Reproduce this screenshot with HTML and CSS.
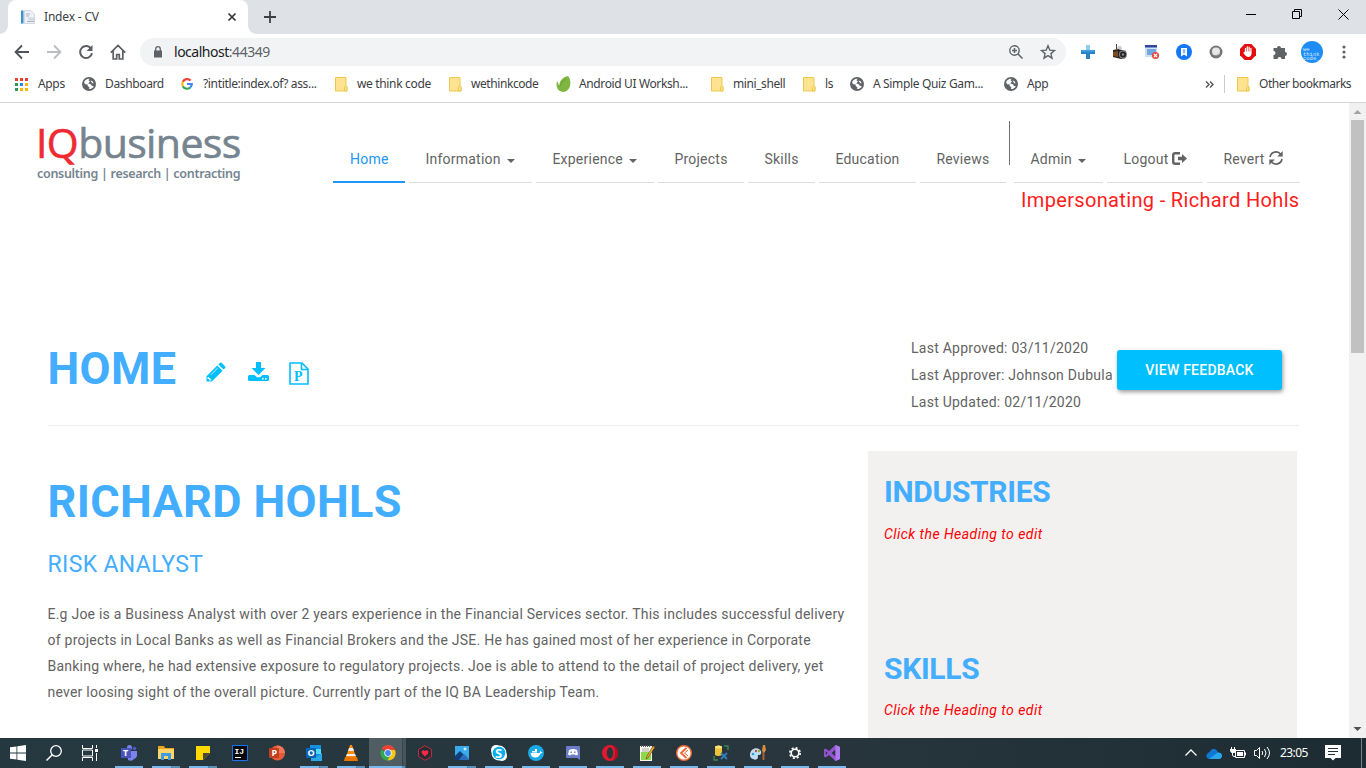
FILE: index.html
```html
<!DOCTYPE html>
<html lang="en">
<head>
<meta charset="utf-8">
<title>Index - CV</title>
<link rel="stylesheet" href="styles.css">
</head>
<body>
<svg class="defs" aria-hidden="true">
  <symbol id="globe" viewBox="0 0 14 14"><circle cx="7" cy="7" r="7" fill="#5f6368"/><path d="M2 5.2C3 3 5 1.6 7.6 1.8L6.5 3.3 8 4.6 6.2 6.4 9 7.2 9.8 8.8 11.8 9.2C11 11 9 12.2 7 12.1L7.4 10.2 5.6 9 5.8 7.6 3.2 7.2Z" fill="#fff"/><path d="M8.5 3.2 10.8 4.6 11.6 6.5 10 6Z" fill="#fff"/></symbol>
  <symbol id="folder" viewBox="0 0 13 15"><path d="M.5.5h10.500v9h1v4.500h-11.500z" fill="#ffe391" stroke="#ecc94e"/><path d="M9.500 14v-3.500q0-1 1.200-1t1.300 1V14z" fill="#ffe391" stroke="#ecc94e"/></symbol>
</svg>

<div class="tabstrip">
  <div class="tab">
    <svg class="favicon" width="16" height="16" viewBox="0 0 16 16"><path d="M1 1h9l5 4v10H1z" fill="#f1f3f6"/><path d="M1 1.500h2.500v13H1z" fill="#3d93cb"/><path d="M4.500 1.500h6l4 3.500v9.500h-10z" fill="#edf0f4" stroke="#cdd3dc" stroke-width=".8"/><path d="M6 5h4M6 7h3M7 12.500h7" stroke="#a9b4c3"/><path d="M8 8.500h6.500v3H8z" fill="#d2d9e2"/></svg>
    <span class="tab-title">Index - CV</span>
    <svg class="tab-close" width="8" height="8" viewBox="0 0 8 8"><path d="M.5.5l7 7M7.500.5l-7 7" stroke="#303438" stroke-width="1.700"/></svg>
  </div>
  <svg class="new-tab" width="12" height="12" viewBox="0 0 12 12"><path d="M6 0v12M0 6h12" stroke="#3c4043" stroke-width="1.800"/></svg>
  <div class="window-buttons">
    <svg width="10" height="11" viewBox="0 0 10 11"><path d="M0 5.500h10" stroke="#000"/></svg>
    <svg width="10" height="10" viewBox="0 0 10 10"><path d="M.5 2.500h7v7h-7zM2.500 2.500v-2h7v7h-2" fill="none" stroke="#000"/></svg>
    <svg width="11" height="11" viewBox="0 0 11 11"><path d="M.5.5l10 10M10.500.5l-10 10" stroke="#000"/></svg>
  </div>
</div>

<div class="toolbar">
  <div class="nav-buttons">
    <svg width="16" height="16" viewBox="0 0 16 16"><path d="M15 8H2M8 1.500L1.500 8 8 14.500" fill="none" stroke="#505357" stroke-width="1.800"/></svg>
    <svg width="16" height="16" viewBox="0 0 16 16"><path d="M1 8h13M8 1.500L14.500 8 8 14.500" fill="none" stroke="#bbbdc0" stroke-width="1.800"/></svg>
    <svg width="16" height="16" viewBox="0 0 16 16"><path d="M13.300 5A6 6 0 1 0 14 9.200" fill="none" stroke="#5a5d61" stroke-width="2"/><path d="M14.500 1v6h-6z" fill="#5a5d61"/></svg>
    <svg width="16" height="16" viewBox="0 0 16 16"><path d="M3.200 7v8h3.500v-4.500h2.600V15h3.500V7M.8 8.700L8 1.500l7.200 7.200" fill="none" stroke="#5a5d61" stroke-width="1.700"/></svg>
  </div>
  <div class="omnibox">
    <svg width="10" height="12" viewBox="0 0 10 12"><path d="M1 4.500h8v7H1z" fill="#5f6368"/><path d="M2.700 5V3a2.300 2.300 0 0 1 4.600 0v2" fill="none" stroke="#5f6368" stroke-width="1.300"/></svg>
    <span class="url"><b>localhost</b>:44349</span>
    <svg class="magnifier" width="14" height="14" viewBox="0 0 14 14"><circle cx="5.500" cy="5.500" r="4.700" fill="none" stroke="#5f6368" stroke-width="1.400"/><path d="M9 9l4.500 4.500M3 5.500h5M5.500 3v5" stroke="#5f6368" stroke-width="1.500"/></svg>
    <svg width="16" height="16" viewBox="0 0 16 16"><path d="M8 1.800l1.800 4.300 4.700.4-3.600 3.100 1.100 4.600L8 11.700l-4 2.500 1.100-4.600L1.500 6.500l4.700-.4z" fill="none" stroke="#5f6368" stroke-width="1.400"/></svg>
  </div>
  <div class="extensions">
    <svg width="16" height="16" viewBox="0 0 16 16"><path d="M6 1h4v5h5v4h-5v5H6v-5H1V6h5z" fill="#3c9ddc"/><path d="M6 1h4v5H6z" fill="#90cdf0"/><path d="M1 8h14v2h-5v5H6v-5H1z" fill="#2b82c4"/></svg>
    <svg width="16" height="16" viewBox="0 0 16 16"><path d="M1 6l5-1 8 2v7l-5 1-8-2z" fill="#292523"/><path d="M1 8l5-1v6l-5-1z" fill="#7b4924"/><path d="M5 5l1-3h3l1 3z" fill="#ccc"/><path d="M4.500 0v5" stroke="#444"/><circle cx="11" cy="10.500" r="4" fill="#888"/><circle cx="11" cy="10.500" r="3" fill="#222"/><circle cx="11" cy="10.500" r="1.300" fill="#889"/></svg>
    <svg width="16" height="16" viewBox="0 0 16 16"><path d="M1 1h12v12H1z" fill="#cfdff2"/><path d="M1 1h12v2.500H1z" fill="#3144a0"/><path d="M3 5h9v6H3z" fill="#72a8df"/><circle cx="11.500" cy="11.500" r="3.600" fill="#e8483c"/><path d="M10 10l3 3m0-3l-3 3" stroke="#fff" stroke-width="1.200"/></svg>
    <svg width="16" height="16" viewBox="0 0 16 16"><circle cx="8" cy="8" r="8" fill="#1477f8"/><path d="M5 4h6v8.500l-3-2-3 2z" fill="#fff"/><path d="M6.800 5.200h2.400v4H6.800z" fill="#8abafb"/></svg>
    <svg width="16" height="16" viewBox="0 0 16 16"><circle cx="8" cy="8" r="6.500" fill="#777"/><circle cx="8" cy="7.500" r="4" fill="#e7e7e7"/><path d="M12 5c0 5-3 7-7 6 2 2 7 1 7-6z" fill="#8f8f8f"/></svg>
    <svg width="16" height="16" viewBox="0 0 16 16"><path d="M4.700 0h6.600L16 4.700v6.600L11.300 16H4.700L0 11.300V4.700z" fill="#e40d10"/><path d="M5.500 8v-3.500M7.300 8V3M9.100 8V3.200M10.900 8V4.500" stroke="#fff" stroke-width="1.300" stroke-linecap="round"/><path d="M4.900 7.500h6.600v2.500q-.5 3-3.200 3-2 0-3.200-1.800L3.200 8.700l1-.6z" fill="#fff"/></svg>
    <svg width="16" height="16" viewBox="0 0 16 16"><path d="M1.500 4H5a2 2 0 1 1 4 0h4v4a2 2 0 1 1 0 4v3H9.500a2 2 0 0 0-4 0h-4v-4a2 2 0 0 0 0-4z" fill="#5f6368"/></svg>
    <svg class="avatar" width="22" height="22" viewBox="0 0 22 22"><circle cx="11" cy="11" r="11" fill="#1d8df5"/><g class="avatar-text"><text x="2" y="10">we</text><text x="2" y="14.500">think</text><text x="2" y="19">code_</text></g></svg>
    <svg width="4" height="14" viewBox="0 0 4 14"><g fill="#5f6368"><circle cx="2" cy="2" r="1.600"/><circle cx="2" cy="7" r="1.600"/><circle cx="2" cy="12" r="1.600"/></g></svg>
  </div>
</div>

<div class="bookmarks">
  <a class="bm bm-apps"><svg width="13" height="13" viewBox="0 0 13 13"><path d="M0 0h3v3H0zM5 0h3v3H5zM10 0h3v3h-3z" fill="#e8402f"/><path d="M0 5h3v3H0zM0 10h3v3H0z" fill="#2a9d53"/><path d="M5 5h3v3H5z" fill="#2688ee"/><path d="M10 5h3v3h-3zM5 10h3v3H5zM10 10h3v3h-3z" fill="#f6b80d"/></svg><span>Apps</span></a>
  <a class="bm bm-dash"><svg width="14" height="14"><use href="#globe"/></svg><span>Dashboard</span></a>
  <a class="bm bm-google"><svg width="12" height="12" viewBox="0 0 12 12"><g fill="none" stroke-width="2.200"><path d="M9.600 2.600A4.800 4.800 0 0 0 1.800 3.800" stroke="#ea4335"/><path d="M1.800 3.800a4.800 4.800 0 0 0 0 4.400" stroke="#fbbc05"/><path d="M1.800 8.200a4.800 4.800 0 0 0 7.300 1.400" stroke="#34a853"/><path d="M9.100 9.600A4.800 4.800 0 0 0 10.800 6H6" stroke="#4285f4"/></g></svg><span>?intitle:index.of? ass...</span></a>
  <a class="bm bm-we"><svg width="13" height="15"><use href="#folder"/></svg><span>we think code</span></a>
  <a class="bm bm-wtc"><svg width="13" height="15"><use href="#folder"/></svg><span>wethinkcode</span></a>
  <a class="bm bm-android"><svg width="15" height="16" viewBox="0 0 15 16"><path d="M12 0c2 2 3 6 2 10s-5 7-9 5.500S-.2 10 1 5c1 1 1 3 2.500 4.500C3 5 7 1 12 0z" fill="#7fb541"/><path d="M3.500 11Q5 6 10 3" fill="none" stroke="#68a032"/></svg><span>Android UI Worksh...</span></a>
  <a class="bm bm-mini"><svg width="13" height="15"><use href="#folder"/></svg><span>mini_shell</span></a>
  <a class="bm bm-ls"><svg width="13" height="15"><use href="#folder"/></svg><span>ls</span></a>
  <a class="bm bm-quiz"><svg width="14" height="14"><use href="#globe"/></svg><span>A Simple Quiz Gam...</span></a>
  <a class="bm bm-app"><svg width="14" height="14"><use href="#globe"/></svg><span>App</span></a>
  <svg class="more" width="9" height="7" viewBox="0 0 9 7"><path d="M1 .5l3 3-3 3M5 .5l3 3-3 3" fill="none" stroke="#505357" stroke-width="1.400"/></svg>
  <a class="bm bm-other"><svg width="13" height="15"><use href="#folder"/></svg><span>Other bookmarks</span></a>
</div>

<div class="viewport">
  <div class="page">
    <header class="site-header">
      <div class="logo">
        <div class="logo-name"><span>IQ</span>business</div>
        <div class="logo-tag">consulting | research | contracting</div>
      </div>
      <nav class="menu">
        <a class="active">Home</a>
        <a>Information<i class="caret"></i></a>
        <a>Experience<i class="caret"></i></a>
        <a>Projects</a>
        <a>Skills</a>
        <a>Education</a>
        <a>Reviews</a>
        <span class="divider"></span>
        <a>Admin<i class="caret"></i></a>
        <a>Logout<svg width="15" height="13" viewBox="0 0 15 13"><path d="M8 1.200H3.200Q1.200 1.200 1.200 3.200v6.600q0 2 2 2H8" fill="none" stroke="#636363" stroke-width="2.400"/><path d="M6 4.800H10V2l5 4.500L10 11V8.200H6z" fill="#636363"/></svg></a>
        <a>Revert<svg width="14" height="14" viewBox="0 0 14 14"><path d="M1 6a6 6 0 0 1 10.800-2.500M13 8A6 6 0 0 1 2.200 10.500" fill="none" stroke="#636363" stroke-width="1.700"/><path d="M13.700 0v5.500H8.200zM.3 14V8.500h5.500z" fill="#636363"/></svg></a>
      </nav>
    </header>
    <div class="impersonating">Impersonating - Richard Hohls</div>

    <section class="title-row">
      <h1>HOME</h1>
      <svg class="i-pencil" width="20" height="20" viewBox="0 0 20 20"><path d="M.5 14.200L11.300 3.400l5.300 5.300L5.800 19.500H.5z" fill="#00bfff"/><path d="M12.300 2.400L14 .8q.8-.7 1.600 0L19.200 4.400q.7.8 0 1.600l-1.600 1.600z" fill="#00bfff"/><path d="M2.200 15v1.500h1.600V18h1.500" fill="none" stroke="#fff" stroke-width="1.200"/><path d="M5 12.700l6.500-6.500" stroke="#fff" stroke-width=".8"/></svg>
      <svg class="i-download" width="21" height="20" viewBox="0 0 21 20"><path d="M8 0h5v6h4.500l-7 7-7-7H8z" fill="#00bfff"/><path d="M1.500 13h5l2.500 2.200h3L14.500 13h5q1.500 0 1.500 1.500v3q0 1.500-1.500 1.500h-18Q0 19 0 17.500v-3Q0 13 1.500 13z" fill="#00bfff"/><path d="M14 16h1.600v1.500H14zM17 16h1.600v1.500H17z" fill="#fff"/></svg>
      <svg class="i-file" width="20" height="23" viewBox="0 0 20 23"><path d="M1 1h12l6 6v15H1zM12.500 1v6.500H19" fill="none" stroke="#00bfff" stroke-width="1.600"/><text class="file-letter" x="5" y="18.500">P</text></svg>
      <div class="approval">
        <div>Last Approved: 03/11/2020</div>
        <div>Last Approver: Johnson Dubula</div>
        <div>Last Updated: 02/11/2020</div>
      </div>
      <button class="feedback">VIEW FEEDBACK</button>
    </section>

    <main class="columns">
      <article>
        <h1 class="person">RICHARD HOHLS</h1>
        <h3>RISK ANALYST</h3>
        <p>E.g Joe is a Business Analyst with over 2 years experience in the Financial Services sector. This includes successful delivery<br>of projects in Local Banks as well as Financial Brokers and the JSE. He has gained most of her experience in Corporate<br>Banking where, he had extensive exposure to regulatory projects. Joe is able to attend to the detail of project delivery, yet<br>never loosing sight of the overall picture. Currently part of the IQ BA Leadership Team.</p>
      </article>
      <aside>
        <h2>INDUSTRIES</h2>
        <em>Click the Heading to edit</em>
        <h2 class="skills">SKILLS</h2>
        <em>Click the Heading to edit</em>
      </aside>
    </main>
  </div>
  <div class="scrollbar">
    <svg width="17" height="17" viewBox="0 0 17 17"><path d="M4.500 11h8L8.500 7z" fill="#a3a3a3"/></svg>
    <div class="thumb"></div>
    <svg class="down" width="17" height="17" viewBox="0 0 17 17"><path d="M4.500 6h8l-4 4z" fill="#505050"/></svg>
  </div>
</div>

<div class="taskbar">
  <div class="sys"><svg width="16" height="16" viewBox="0 0 16 16"><path d="M0 2.300L6.500 1.400v6.200H0zM7.300 1.300L16 0v7.600H7.300zM0 8.400h6.500v6.200L0 13.700zM7.300 8.400H16V16l-8.700-1.300z" fill="#fff"/></svg></div>
  <div class="sys"><svg width="16" height="16" viewBox="0 0 16 16"><circle cx="10" cy="6" r="5.300" fill="none" stroke="#fff" stroke-width="1.300"/><path d="M6.300 9.700L.5 15.500" stroke="#fff" stroke-width="1.500"/></svg></div>
  <div class="sys"><svg width="16" height="16" viewBox="0 0 16 16"><path d="M.5 0v3.500h10V0M.5 16v-3.500h10V16M.5 5h10v6H.5zM14.500 0v3M14.500 8v8" fill="none" stroke="#fff"/><path d="M13 4h3v3h-3z" fill="#fff"/></svg></div>
  <div class="task run"><svg width="16" height="16" viewBox="0 0 16 16"><circle cx="8.500" cy="2.500" r="2.500" fill="#7b83eb"/><circle cx="13.500" cy="3.500" r="1.800" fill="#5059c9"/><path d="M6 6h10v5q-1 3-3 3-2 3-6 1z" fill="#7b83eb"/><path d="M0 3h10v10H0z" fill="#4b53bc"/><text class="tiny white" x="2" y="11">T</text></svg></div>
  <div class="task run multi"><svg width="16" height="16" viewBox="0 0 16 16"><path d="M0 1h6l1 2h9v11H0z" fill="#e9a51e"/><path d="M0 4h16v10H0z" fill="#ffd567"/><path d="M3 15V8h10v7h-3v-4H6v4z" fill="#3b9be5"/></svg></div>
  <div class="task run multi"><svg width="16" height="16" viewBox="0 0 16 16"><path d="M1 1h14v14H1z" fill="#ffd900"/><path d="M8 15V8h7z" fill="#4b4b35"/><path d="M15 8v7H8z" fill="#2a373c"/></svg></div>
  <div class="task"><svg width="16" height="16" viewBox="0 0 16 16"><path d="M.5.5h15v15H.5z" fill="#080808" stroke="#1675f2"/><text class="ij white" x="2.500" y="9">IJ</text><path d="M3 12.500h6" stroke="#fff"/></svg></div>
  <div class="task"><svg width="16" height="16" viewBox="0 0 16 16"><circle cx="8.500" cy="8" r="7.500" fill="#e55b3c"/><path d="M8 .5a7.500 7.500 0 0 1 8 7.500H8z" fill="#f0795a"/><rect y="3" width="10" height="10" rx="1" fill="#c43e1c"/><text class="tiny white" x="2.500" y="11">P</text></svg></div>
  <div class="task run multi"><svg width="16" height="16" viewBox="0 0 16 16"><path d="M4 0h11v12H4z" fill="#1490df"/><path d="M9 4h6v5H9z" fill="#50d9ff"/><path d="M5 9l5 3 6-4v8H5z" fill="#28a8ea"/><path d="M0 3h10v10H0z" fill="#0364b8"/><text class="tiny white" x="1.500" y="11">O</text></svg></div>
  <div class="task run multi"><svg width="16" height="16" viewBox="0 0 16 16"><path d="M7 0h2l4 12H3z" fill="#ff8a0d"/><path d="M6 3h4l1 3H5zM4 9h8l1 2H3z" fill="#eee"/><path d="M2 12h12l1 4H1z" fill="#e87500"/></svg></div>
  <div class="task run current"><svg width="16" height="16" viewBox="0 0 16 16"><path d="M8 8L1.500 3.500A7.500 7.500 0 0 1 15 5z" fill="#e84435"/><path d="M8 8h-1L1.300 4.500A7.500 7.500 0 0 0 7.500 15.500L11 9z" fill="#31a852"/><path d="M8 5h7A7.500 7.500 0 0 1 7.500 15.500L11 9z" fill="#fdc60b"/><circle cx="8" cy="8" r="3.700" fill="#fff"/><circle cx="8" cy="8" r="2.900" fill="#4285f4"/></svg></div>
  <div class="task"><svg width="16" height="16" viewBox="0 0 16 16"><path d="M8 .7l6.500 3.700v7.200L8 15.300l-6.500-3.700V4.400z" fill="#292b32" stroke="#bc2b43"/><path d="M8 11.500L5 8.500C3.700 6.500 6 4 8 6c2-2 4.300.5 3 2.500z" fill="#ff2745"/></svg></div>
  <div class="task run multi"><svg width="16" height="16" viewBox="0 0 16 16"><path d="M1 1h14v14H1z" fill="#38abed"/><path d="M1 11l5-5 9 9H1z" fill="#103e79"/><path d="M7 12l3-3 5 5v1H5z" fill="#2c6eb9"/><path d="M10.500 2.500h1v3h-1zM9.500 3.500h3v1h-3z" fill="#fff"/></svg></div>
  <div class="task run"><svg width="16" height="16" viewBox="0 0 16 16"><circle cx="5" cy="5" r="5" fill="#fff"/><circle cx="11" cy="11" r="5" fill="#fff"/><circle cx="8" cy="8" r="7.500" fill="#fff"/><circle cx="8" cy="8" r="6.300" fill="#00aff0"/><text class="skype white" x="4" y="13">S</text></svg></div>
  <div class="task run"><svg width="16" height="16" viewBox="0 0 16 16"><circle cx="8" cy="8" r="8" fill="#17a9e8"/><path d="M2.500 8h9q1-1 .5-2.500 1 .5 1 1.500l1.500.2q-.5 1.300-2 1.300-1.500 4-5 4-4.500 0-5-4.500zM4 6h5v1.500H4zM7 4h2v2H7z" fill="#fff"/></svg></div>
  <div class="task run"><svg width="14" height="14" viewBox="0 0 14 14"><path d="M1 0h12q1 0 1 1v13l-3-2H1q-1 0-1-1V1q0-1 1-1z" fill="#6b7dc9"/><path d="M3 4q4-2 8 0l1 4.500-2 1-1-1H5l-1 1-2-1z" fill="#fff"/><path d="M4.500 5.500h1.300v1.600H4.500zM8.200 5.500h1.300v1.600H8.200z" fill="#6b7dc9"/></svg></div>
  <div class="task run"><svg width="16" height="16" viewBox="0 0 16 16"><ellipse cx="8" cy="8" rx="8" ry="8" fill="#e3182e"/><path d="M10 0.300q6 1.500 6 7.700t-6 7.700q3-2 3-7.700t-3-7.700z" fill="#b01025"/><ellipse cx="8" cy="8" rx="3.200" ry="5.700" fill="#28353a"/></svg></div>
  <div class="task run"><svg width="16" height="16" viewBox="0 0 16 16"><path d="M1 1h12v15H1z" fill="#f6f6ee"/><path d="M2 7h10v8H2z" fill="#8dd94b"/><path d="M2 1h10" stroke="#555" stroke-width="2" stroke-dasharray="1 1"/><path d="M3 4h7M3 6h7" stroke="#aaa"/><path d="M14 1l2 1-7 11-2 1 1-3z" fill="#eda826" stroke="#664421" stroke-width=".6"/></svg></div>
  <div class="task run"><svg width="16" height="16" viewBox="0 0 16 16"><circle cx="8" cy="8" r="7.300" fill="#fff" stroke="#f26631" stroke-width="1.400"/><path d="M10.500 3L5 8l5.500 5" fill="none" stroke="#f26631" stroke-width="1.800"/><path d="M12 5L8.500 8l3.500 3" fill="none" stroke="#f26631"/></svg></div>
  <div class="task run"><svg width="16" height="16" viewBox="0 0 16 16"><path d="M2 2q4-3 7 0v8q-4 2-7 0z" fill="#ecc339"/><ellipse cx="5.500" cy="2" rx="3.500" ry="1.500" fill="#ffe478"/><path d="M11 1h4v4M1 11v4h4" fill="none" stroke="#398751" stroke-width="1.400"/><path d="M8 8l6 6M14 8l-6 6" stroke="#3080bd" stroke-width="1.800"/></svg></div>
  <div class="task run"><svg width="16" height="16" viewBox="0 0 16 16"><path d="M0 10C0 5 5 2 9 4q4 3 1 6-3-1-2 3-2 3-5 1-3-1-3-4z" fill="#bddff1"/><circle cx="3" cy="9" r="1.300" fill="#2999e4"/><circle cx="6" cy="6" r="1.200" fill="#da4337"/><circle cx="9" cy="6" r="1.200" fill="#75b742"/><path d="M13 0h2l1 5-2 3h-1l-1-3z" fill="#d98a3f"/><path d="M13.500 7v8" stroke="#ad6130" stroke-width="2"/></svg></div>
  <div class="task run"><svg width="16" height="16" viewBox="0 0 16 16"><circle cx="8" cy="8" r="3.800" fill="none" stroke="#fff" stroke-width="1.600"/><circle cx="8" cy="8" r="5.200" fill="none" stroke="#fff" stroke-width="1.600" stroke-dasharray="2.040 2.040"/></svg></div>
  <div class="task run"><svg width="16" height="16" viewBox="0 0 16 16"><path d="M11.500 0L16 2v12l-4.500 2L5 10l-3.500 2.500L0 11.500v-7l1.500-1L5 6zM11.500 4.500L7.500 8l4 3.500zM1.700 6v4L3.600 8z" fill="#9454d2" fill-rule="evenodd"/><path d="M11.500 0L16 2v12l-4.500 2z" fill="#b179f1"/></svg></div>
  <div class="tray">
    <svg class="t-up" width="12" height="8" viewBox="0 0 12 8"><path d="M.5 6.500L6 1l5.500 5.500" fill="none" stroke="#fff" stroke-width="1.300"/></svg>
    <svg class="t-cloud" width="16" height="11" viewBox="0 0 16 11"><path d="M1 10q-2-4 2.500-6Q7-1.500 11 2.500q0 1 1 1.500 4 1 4 4-1 3-3 3H3z" fill="#0f78d4"/><path d="M3 11l8-6q5-1 5 3.500Q15 11 13 11z" fill="#28a8ea"/></svg>
    <svg class="t-power" width="17" height="12" viewBox="0 0 17 12"><path d="M5.500 3.500h9v7h-9zM15.500 5.500v3M2.500 4v4q0 2 3 1.500M1.500 0v3M4.500 0v3" fill="none" stroke="#fff"/><path d="M0 2h6v2L4.500 6h-3L0 4z" fill="#fff"/><path d="M7 5h6v4H7z" fill="#fff"/></svg>
    <svg class="t-sound" width="17" height="14" viewBox="0 0 17 14"><path d="M.5 4.500h2l3-3v11l-3-3h-2zM8 5q1.500 2 0 4M10.500 3q3 4 0 8M13 1q5 6 0 12" fill="none" stroke="#fff"/></svg>
    <span class="clock">23:05</span>
    <svg class="t-note" width="16" height="16" viewBox="0 0 16 16"><path d="M0 0h16v13h-5.500L8 15.500 5.500 13H0z" fill="#fff"/><path d="M3 3.500h10M3 6.500h10M3 9.500h7" stroke="#22323a"/></svg>
    <span class="peek"></span>
  </div>
</div>
</body>
</html>
```
FILE: styles.css
```css
* { box-sizing: border-box; }
body { margin: 0; width: 1366px; height: 768px; overflow: hidden; background: #fff; font-family: "Noto Sans", sans-serif; font-size: 12px; color: #3c4043; display: flex; flex-direction: column; }
svg { display: block; flex: none; overflow: visible; }
.defs { position: absolute; width: 0; height: 0; }

/* browser window */
.tabstrip { height: 34px; flex: none; background: #dee1e6; display: flex; align-items: center; padding-left: 8px; }
.tab { position: relative; width: 240px; height: 34px; background: #fff; border-radius: 8px 8px 0 0; display: flex; align-items: center; padding: 0 12px; }
.tab::before, .tab::after { content: ""; position: absolute; bottom: 0; width: 8px; height: 8px; }
.tab::before { left: -8px; background: radial-gradient(circle at 0 0, #dee1e6 7.500px, #fff 8px); }
.tab::after { right: -8px; background: radial-gradient(circle at 100% 0, #dee1e6 7.500px, #fff 8px); }
.tab-title { margin-left: 8px; padding-bottom: 1px; flex: 1; letter-spacing: -.18px; }
.new-tab { margin-left: 16px; }
.window-buttons { margin-left: auto; display: flex; align-items: center; gap: 36px; padding-right: 17px; height: 34px; padding-bottom: 6px; }
.toolbar { height: 36px; flex: none; display: flex; align-items: center; }
.nav-buttons { display: flex; gap: 16px; padding-left: 14px; width: 140px; }
.omnibox { width: 926px; height: 28px; background: #f1f3f4; border-radius: 14px; display: flex; align-items: center; padding: 0 10px 0 13px; }
.url { font-size: 14px; margin-left: 11px; padding-bottom: 2px; flex: 1; color: #5f6368; letter-spacing: -.48px; }
.url b { font-weight: 400; color: #202124; }
.magnifier { margin-right: 17px; }
.extensions { flex: 1; display: flex; align-items: center; gap: 16px; padding-left: 14px; }
.extensions .avatar { margin: 0 3px 0 -3px; }
.avatar-text { font: 5.500px "Liberation Mono", monospace; fill: #d5eaff; }
.bookmarks { height: 33px; flex: none; border-bottom: 1px solid #d5d6d8; display: flex; align-items: center; padding: 0 0 4px 15px; }
.bm { display: flex; align-items: center; white-space: nowrap; flex: none; letter-spacing: -.34px; }
.bm svg { margin-right: 9px; }
.bm span { padding-bottom: 1px; }
.bm-apps { width: 67px; }
.bm-apps svg { margin-right: 10px; }
.bm-dash { width: 99px; letter-spacing: -.36px; }
.bm-google { width: 154px; }
.bm-google svg { margin-right: 10px; }
.bm-we { width: 114px; }
.bm-wtc { width: 107px; letter-spacing: -.42px; }
.bm-android { width: 155px; letter-spacing: -.37px; }
.bm-android svg { margin-right: 8px; }
.bm-mini { width: 92px; letter-spacing: -.42px; }
.bm-ls { width: 47px; }
.bm-quiz { width: 154px; }
.bm-app { width: 201px; }
.bm-other { border-left: 1px solid #c9cbce; margin-left: 10px; padding-left: 12px; letter-spacing: -.48px; }

/* document */
.viewport { height: 635px; flex: none; display: flex; overflow: hidden; }
.page { width: 1349px; font-family: Roboto, sans-serif; color: #636363; font-size: 14px; letter-spacing: .235px; overflow: hidden; }
.scrollbar { width: 17px; background: #f1f1f1; display: flex; flex-direction: column; }
.thumb { width: 13px; height: 233px; margin-left: 2px; background: #c1c1c1; }
.down { margin-top: auto; }
.site-header { display: flex; height: 80px; padding: 18px 0 0 37px; }
.logo { width: 296px; white-space: nowrap; font-family: "Open Sans", sans-serif; color: #75848f; }
.logo-name { font-size: 41px; line-height: 42px; letter-spacing: -.6px; margin-left: -3px; padding-left: 2px; -webkit-text-stroke: .6px; }
.logo-name span { color: #ee2931; }
.logo-tag { font-family: "Noto Sans", sans-serif; font-size: 12.500px; font-weight: 600; line-height: 14px; letter-spacing: -.3px; margin-top: 4px; }
.menu { display: grid; grid-template-columns: 76px 127px 122px 90px 71px 101px 89px 5px 93px 100px 93px; height: 62px; }
.menu a { display: flex; align-items: flex-end; padding: 0 0 12px 16.400px; margin-right: 4px; border-bottom: 1px solid #ddd; line-height: 22px; white-space: nowrap; }
.menu a.active { color: #2196f3; border-bottom: 2px solid #2196f3; padding: 0 0 11px 17px; }
.menu a:last-child { margin-right: 0; }
.menu a:nth-child(7) { margin-right: 3px; }
.menu svg { margin: 0 0 5px 4px; }
.caret { border: 4.500px solid transparent; border-top-color: #636363; border-bottom: 0; margin: 0 0 7px 6px; }
.divider { width: 1px; height: 44px; background: #6f6f6f; }
.impersonating { text-align: right; padding-right: 49.500px; font-size: 20px; line-height: 34px; letter-spacing: .34px; color: #ff1c1c; }
.title-row { display: flex; height: 107px; margin: 102px 50px 0 48px; border-bottom: 1px solid #eee; align-items: flex-start; }
h1, h2, h3, p { margin: 0; }
h1 { font-size: 45px; font-weight: 700; line-height: 60px; color: #43adff; letter-spacing: .35px; }
.title-row h1 { width: 158.500px; padding-top: 20px; margin-left: -.5px; }
.i-pencil { margin-top: 43px; }
.i-download { margin: 43px 0 0 22px; }
.i-file { margin: 43px 0 0 20px; }
.file-letter { font: bold 14px "Liberation Serif", serif; fill: #00bfff; }
.approval { margin: 16px 0 0 auto; line-height: 27px; width: 206px; white-space: nowrap; letter-spacing: .25px; }
.feedback { margin: 31px 17px 0 0; padding: 0; width: 165px; height: 40px; border: 0; border-radius: 3px; background: #00bfff; color: #fff; font: 500 14px Roboto, sans-serif; letter-spacing: .23px; box-shadow: 1px 2px 4px rgba(0,0,0,.4); }
.columns { display: flex; margin: 25px 52px 0 48px; }
article { width: 820px; margin-left: -.5px; }
.person { padding-top: 21px; }
h3 { font-size: 23px; font-weight: 400; line-height: 30px; color: #43adff; margin-top: 18px; letter-spacing: .35px; }
p { line-height: 26px; margin-top: 21px; white-space: nowrap; }
aside { flex: 1; height: 400px; background: #f3f1f0; padding: 21px 16.500px; }
h2 { font-size: 30px; font-weight: 700; line-height: 40px; color: #43adff; letter-spacing: -.32px; }
em { display: block; line-height: 22px; margin-top: 11px; color: #f00; letter-spacing: .45px; }
h2.skills { margin-top: 104px; }
em:last-child { margin-top: 10px; }

/* desktop taskbar */
.taskbar { height: 30px; flex: none; background: linear-gradient(90deg, #253840, #29363d 55%, #1d2c33); display: flex; }
.sys { width: 36px; display: flex; align-items: center; justify-content: center; }
.sys:nth-child(3) { margin-right: 2px; }
.task { position: relative; width: 37px; display: flex; align-items: center; justify-content: center; }
.task svg { margin-left: 1px; }
.task.run::after { content: ""; position: absolute; left: 5px; bottom: 0; width: 28px; height: 2px; background: #76b9ed; }
.task.multi::after { background: linear-gradient(90deg, #76b9ed 19px, #47718d 19px, #5790b8 20px); }
.task.current { background: linear-gradient(90deg, #505d63 33px, #27363d 33px, #46545b 34px); }
.task.current::after { left: 0; width: 36px; background: linear-gradient(90deg, #76b9ed 33px, #5790b8 33px); }
.white { fill: #fff; }
.tiny { font: bold 9px "Open Sans", sans-serif; }
.ij { font: bold 8px "Liberation Mono", monospace; }
.skype { font: bold 13px "Open Sans", sans-serif; }
.tray { margin-left: auto; display: flex; align-items: center; color: #fff; }
.t-cloud { margin-left: 9px; }
.t-power { margin-left: 8px; }
.t-sound { margin-left: 7px; }
.clock { margin-left: 9px; width: 45px; padding-bottom: 1px; font-size: 12px; letter-spacing: -.6px; }
.t-note { margin-right: 20px; }
.peek { width: 5px; height: 30px; border-left: 1px solid #71808a; }
```
